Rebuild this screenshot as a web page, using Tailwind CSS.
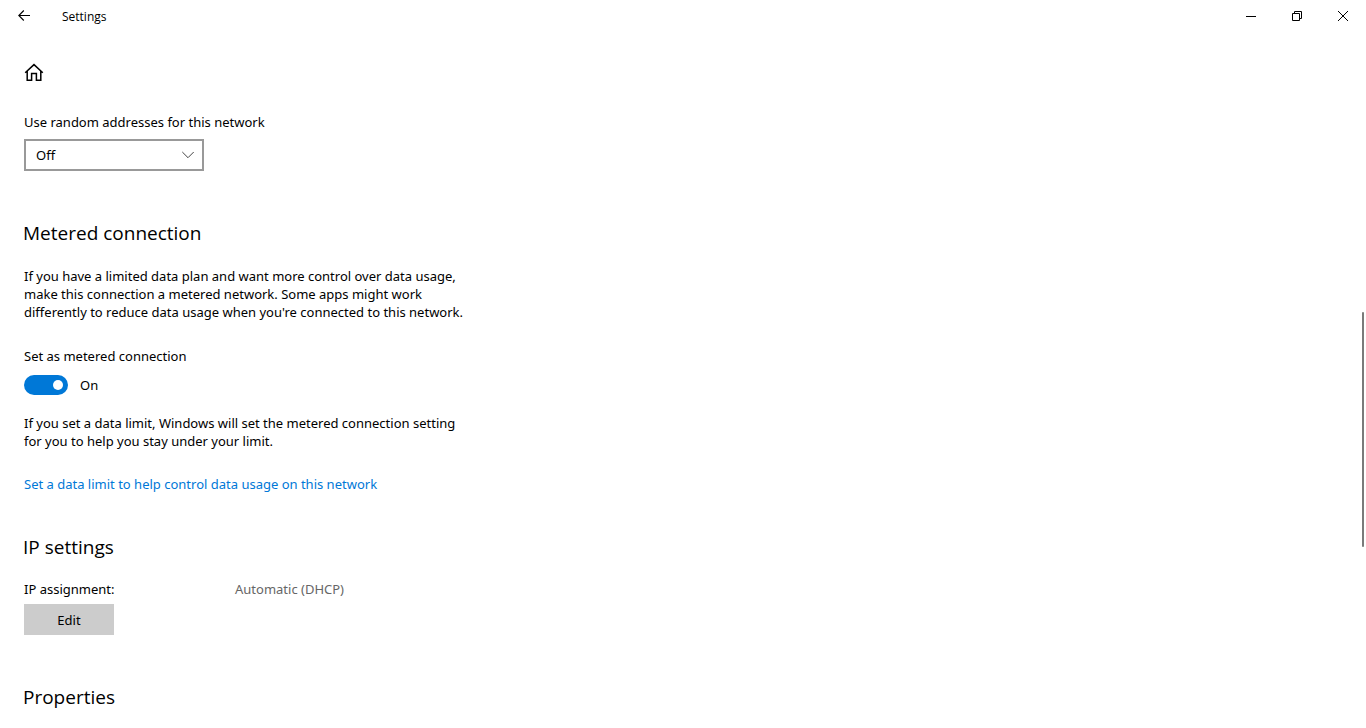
<!DOCTYPE html>
<html lang="en">

<head>
    <meta charset="UTF-8">
    <meta name="viewport" content="width=device-width, initial-scale=1.0">
    <title>Settings</title>
    <script src="https://cdn.jsdelivr.net/npm/@tailwindcss/browser@4"></script>
</head>

<body class="relative min-h-screen overflow-x-hidden bg-white font-['Noto_Sans','Open_Sans',sans-serif] text-[13px]/[18px] text-black">
    <!-- Title bar -->
    <header class="flex h-8 items-center">
        <button type="button" aria-label="Back" class="flex h-8 w-12 items-center justify-center">
            <svg class="h-3 w-3" viewBox="0 0 12 12" fill="none" stroke="currentColor" stroke-width="1.1">
                <path d="M12 5.5H.8M5.8.5L.8 5.5l5 5" />
            </svg>
        </button>
        <span class="ml-3.5 flex-1 pt-0.5 font-['Open_Sans',sans-serif] text-xs/4">Settings</span>
        <button type="button" aria-label="Minimize" class="flex h-8 w-[46px] items-center justify-center">
            <svg class="h-2.5 w-2.5" viewBox="0 0 10 10" fill="none" stroke="currentColor">
                <path d="M0 5.5h10" />
            </svg>
        </button>
        <button type="button" aria-label="Restore" class="flex h-8 w-[46px] items-center justify-center">
            <svg class="h-2.5 w-2.5" viewBox="0 0 10 10" fill="none" stroke="currentColor">
                <path d="M.5 2.5h7v7h-7zM2.5 2.5v-2h7v7h-2" />
            </svg>
        </button>
        <button type="button" aria-label="Close" class="flex h-8 w-[46px] items-center justify-center">
            <svg class="h-2.5 w-2.5" viewBox="0 0 10 10" fill="none" stroke="currentColor">
                <path d="M0 0l10 10M10 0L0 10" />
            </svg>
        </button>
    </header>

    <main class="px-6 pt-[30px] pb-4">
        <a href="#" aria-label="Home" class="block w-5">
            <svg class="h-5 w-5" viewBox="0 0 20 20" fill="none" stroke="currentColor" stroke-width="1.5">
                <path d="M1.2 10.8L10 2.6l8.8 8.2M3.2 9v9.2h4.4V11.4h4.8v6.8h4.4V9" />
            </svg>
        </a>

        <!-- Random addresses -->
        <label for="randomAddresses" class="mt-[31px] block">Use random addresses for this network</label>
        <div class="relative mt-2 w-[180px]">
            <select id="randomAddresses" class="block h-8 w-full appearance-none border-2 border-[#999] bg-white px-2.5">
                <option selected>Off</option>
                <option>On</option>
                <option>Change daily</option>
            </select>
            <svg class="pointer-events-none absolute top-3 right-2.5 h-2 w-3" viewBox="0 0 12 8" fill="none" stroke="#444">
                <path d="M.3 1L6 6.7 11.7 1" />
            </svg>
        </div>

        <!-- Metered connection -->
        <section class="mt-12 max-w-[450px]">
            <h2 class="-ml-px font-['Open_Sans',sans-serif] text-[19px]/7">Metered connection</h2>
            <p class="mt-5">If you have a limited data plan and want more control over data usage, make this connection a metered network. Some apps might work differently to reduce data usage when you're connected to this network.</p>
            <label for="metered" class="mt-[26px] block">Set as metered connection</label>
            <div class="mt-2.5 flex h-5 items-center gap-3">
                <input type="checkbox" id="metered" role="switch" checked
                    class="h-5 w-11 appearance-none rounded-full bg-[#999] before:mt-[5px] before:ml-[5px] before:block before:h-2.5 before:w-2.5 before:rounded-full before:bg-white checked:bg-[#0078d7] checked:before:ml-[29px]">
                <span>On</span>
            </div>
            <p class="mt-[19px]">If you set a data limit, Windows will set the metered connection setting for you to help you stay under your limit.</p>
            <a href="#" class="mt-[25px] block text-[#0078d7]">Set a data limit to help control data usage on this network</a>
        </section>

        <!-- IP settings -->
        <section class="mt-10">
            <h2 class="-ml-px font-['Open_Sans',sans-serif] text-[19px]/7">IP settings</h2>
            <dl class="mt-[19px] flex">
                <dt class="w-[211px]">IP assignment:</dt>
                <dd class="text-[#666]">Automatic (DHCP)</dd>
            </dl>
            <button type="button" class="mt-1.5 block h-[31px] w-[90px] bg-[#ccc]">Edit</button>
        </section>

        <section class="mt-12">
            <h2 class="-ml-px font-['Open_Sans',sans-serif] text-[19px]/7">Properties</h2>
        </section>
    </main>

    <!-- Scroll thumb -->
    <div class="absolute top-[312px] right-0.5 h-[235px] w-0.5 rounded-full bg-[#7a7a7a]"></div>
</body>

</html>
